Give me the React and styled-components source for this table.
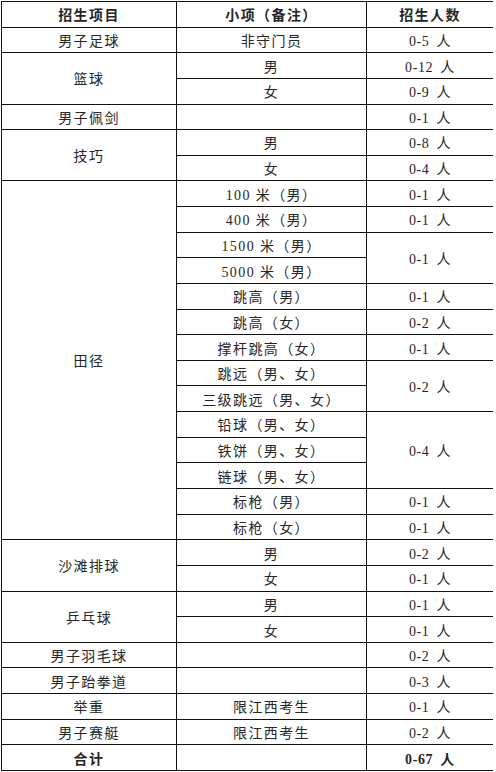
import React from "react";
import styled, { createGlobalStyle } from "styled-components";

/* 样式 */
const Global = createGlobalStyle`
    html, body {
        margin: 0;
        padding: 0;
        background: #fff;
    }
`;

const Page = styled.div`
    padding: 1px 0 0 1px;
`;

const Table = styled.div`
    display: grid;
    grid-template-columns: 174px 189px 126px;
    grid-template-rows: repeat(30, 1fr);
    gap: 1px;
    width: 492px;
    height: 770px;
    padding: 1px;
    box-sizing: border-box;
    background: #111;
    font-family: "Liberation Serif", "Noto Sans CJK SC", serif;
    font-size: 14px;
    color: #262626;
`;

const Cell = styled.div`
    grid-row: span ${props => props.$span || 1};
    display: flex;
    align-items: center;
    justify-content: center;
    background: #fff;
    font-weight: ${props => (props.$bold ? 700 : 400)};
    letter-spacing: ${props => (props.$num ? "0.6px" : "1.4px")};
    word-spacing: ${props => (props.$num ? "3px" : "0")};
    white-space: pre;
`;

// [项目, 跨行, [[小项, 人数, 人数跨行], ...]]
const rows = [
    ["男子足球", 1, [["非守门员", "0-5 人", 1]]],
    ["篮球", 2, [["男", "0-12 人", 1], ["女", "0-9 人", 1]]],
    ["男子佩剑", 1, [["", "0-1 人", 1]]],
    ["技巧", 2, [["男", "0-8 人", 1], ["女", "0-4 人", 1]]],
    ["田径", 14, [
        ["100 米（男）", "0-1 人", 1],
        ["400 米（男）", "0-1 人", 1],
        ["1500 米（男）", "0-1 人", 2],
        ["5000 米（男）", null],
        ["跳高（男）", "0-1 人", 1],
        ["跳高（女）", "0-2 人", 1],
        ["撑杆跳高（女）", "0-1 人", 1],
        ["跳远（男、女）", "0-2 人", 2],
        ["三级跳远（男、女）", null],
        ["铅球（男、女）", "0-4 人", 3],
        ["铁饼（男、女）", null],
        ["链球（男、女）", null],
        ["标枪（男）", "0-1 人", 1],
        ["标枪（女）", "0-1 人", 1],
    ]],
    ["沙滩排球", 2, [["男", "0-2 人", 1], ["女", "0-1 人", 1]]],
    ["乒乓球", 2, [["男", "0-1 人", 1], ["女", "0-1 人", 1]]],
    ["男子羽毛球", 1, [["", "0-2 人", 1]]],
    ["男子跆拳道", 1, [["", "0-3 人", 1]]],
    ["举重", 1, [["限江西考生", "0-1 人", 1]]],
    ["男子赛艇", 1, [["限江西考生", "0-2 人", 1]]],
];

const App = function App() {
    return <Page>
        <Global />
        <Table>
            <Cell $bold>招生项目</Cell>
            <Cell $bold>小项（备注）</Cell>
            <Cell $bold>招生人数</Cell>
            {rows.map(([name, span, subs]) => (
                <React.Fragment key={name}>
                    <Cell $span={span}>{name}</Cell>
                    {subs.map(([sub, num, numSpan], i) => (
                        <React.Fragment key={i}>
                            <Cell>{sub}</Cell>
                            {num !== null && <Cell $num $span={numSpan}>{num}</Cell>}
                        </React.Fragment>
                    ))}
                </React.Fragment>
            ))}
            <Cell $bold>合计</Cell>
            <Cell></Cell>
            <Cell $bold $num>0-67 人</Cell>
        </Table>
    </Page>;
};

export default App;
